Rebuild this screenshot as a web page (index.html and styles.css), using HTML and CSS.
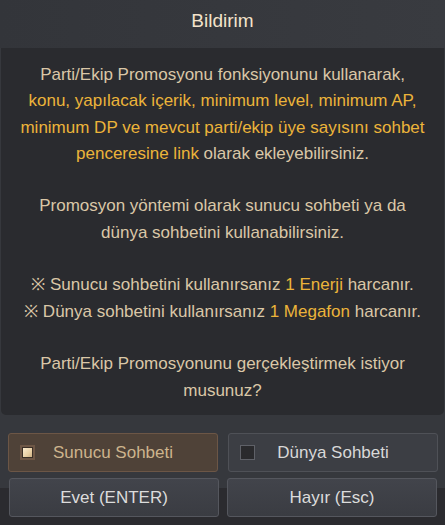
FILE: index.html
```html
<!DOCTYPE html>
<html lang="tr">
<head>
<meta charset="utf-8">
<link rel="stylesheet" href="styles.css">
</head>
<body>
<div class="dialog">
  <div class="header">Bildirim</div>
  <div class="panel">
    <p>Parti/Ekip Promosyonu fonksiyonunu kullanarak,<br><span class="hl">konu, yapılacak içerik, minimum level, minimum AP,<br>minimum DP ve mevcut parti/ekip üye sayısını sohbet<br>penceresine link</span> olarak ekleyebilirsiniz.</p>
    <p>Promosyon yöntemi olarak sunucu sohbeti ya da<br>dünya sohbetini kullanabilirsiniz.</p>
    <p>※ Sunucu sohbetini kullanırsanız <span class="hl">1 Enerji</span> harcanır.<br>※ Dünya sohbetini kullanırsanız <span class="hl">1 Megafon</span> harcanır.</p>
    <p>Parti/Ekip Promosyonunu gerçekleştirmek istiyor<br>musunuz?</p>
  </div>
  <div class="options">
    <div class="opt opt-on"><span class="box box-on"></span><span class="opt-label">Sunucu Sohbeti</span></div>
    <div class="opt"><span class="box"></span><span class="opt-label">Dünya Sohbeti</span></div>
  </div>
  <div class="actions">
    <div class="btn">Evet (ENTER)</div>
    <div class="btn">Hayır (Esc)</div>
  </div>
</div>
</body>
</html>
```

FILE: styles.css
```css
html, body {
  margin: 0;
  padding: 0;
  background: #2b2c30;
}
.dialog {
  width: 445px;
  height: 525px;
  display: flex;
  flex-direction: column;
  font-family: "Liberation Sans", Arial, sans-serif;
  background: linear-gradient(to bottom, #36383d 0, #36383d 488px, #2b2b2f 488px);
}
.header {
  height: 48px;
  box-sizing: border-box;
  padding-top: 10px;
  line-height: 22px;
  text-align: center;
  font-size: 19px;
  color: #f3e3cb;
  background: linear-gradient(to right, #33353a, #393b40);
}
.panel {
  height: 367px;
  box-sizing: border-box;
  margin: 0 1px;
  padding-top: 14px;
  background: #2a2b2f;
  border-radius: 0 0 5px 5px;
  text-align: center;
  font-size: 17px;
  line-height: 26.3px;
  color: #dac7a7;
}
.panel p {
  margin: 0 0 26.3px;
}
.hl {
  color: #ecb43a;
}
.options {
  display: flex;
  gap: 10px;
  padding: 18px 7px 0 8px;
}
.opt {
  flex: 1;
  height: 39px;
  box-sizing: border-box;
  display: flex;
  align-items: center;
  padding-left: 11px;
  background: #3c3e44;
  border: 1px solid #4f5157;
  border-radius: 3px;
  font-size: 17px;
  color: #d8d8d8;
}
.opt-on {
  background: #4f4238;
  border-color: #6c5646;
  color: #cdb48d;
}
.opt-label {
  flex: 1;
  text-align: center;
  padding-right: 26px;
}
.box {
  width: 15px;
  height: 15px;
  box-sizing: border-box;
  background: #2a2a2d;
  border: 1px solid #5f6168;
}
.box-on {
  border: 2px solid #6e5746;
  background: linear-gradient(135deg, #fff2d8 0%, #e8cfa3 60%, #c3a578 100%);
  box-shadow: 0 0 0 1px #3a2f27 inset;
}
.actions {
  display: flex;
  gap: 8px;
  padding: 6px 8px 0 9px;
}
.btn {
  flex: 1;
  height: 39px;
  box-sizing: border-box;
  display: flex;
  align-items: center;
  justify-content: center;
  background: linear-gradient(to bottom, #42444b, #3a3c42);
  border: 1px solid #55575e;
  border-radius: 3px;
  font-size: 17px;
  color: #dcdcdc;
}
```
